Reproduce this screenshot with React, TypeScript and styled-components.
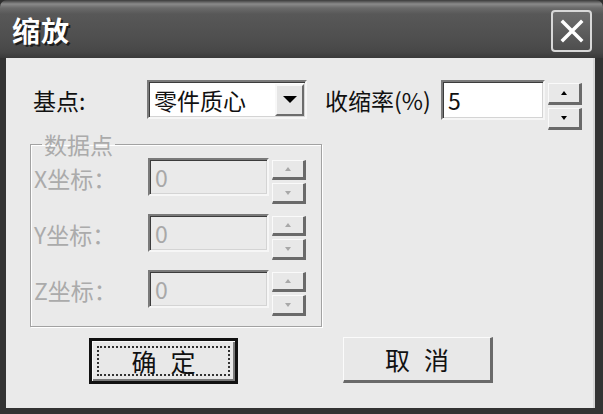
import React from "react";
import styled, { createGlobalStyle } from "styled-components";

const GlobalStyle = createGlobalStyle`
  html, body {
    margin: 0;
    padding: 0;
    background: #2e2e2e;
  }
  body {
    font-family: "Noto Sans CJK SC", "Liberation Sans", sans-serif;
  }
`;

const Window = styled.div`
  width: 603px;
  height: 414px;
  display: flex;
  flex-direction: column;
  background: #333;
  border-radius: 7px 7px 0 0;
  overflow: hidden;
`;

const TitleBar = styled.div`
  height: 58px;
  flex: none;
  display: flex;
  align-items: center;
  justify-content: space-between;
  padding: 0 11px 0 12px;
  box-sizing: border-box;
  background: linear-gradient(
    to bottom,
    #3a3a3a 0px,
    #8a8a8a 4px,
    #6a6a6a 8px,
    #585858 14px,
    #4e4e4e 40px,
    #474747 52px,
    #3a3a3a 58px
  );
`;

const Title = styled.span`
  color: #fff;
  font-size: 28px;
  font-weight: 700;
  letter-spacing: 1px;
  text-shadow: 2px 2px 0 #1e1e1e;
  margin-top: 2px;
`;

const CloseButton = styled.div`
  width: 41px;
  height: 42px;
  box-sizing: border-box;
  border: 2px solid #d8d8d8;
  border-radius: 4px;
  background: linear-gradient(to bottom, #6e6e6e, #4e4e4e);
  display: flex;
  align-items: center;
  justify-content: center;
  margin-top: 4px;
`;

const Body = styled.div`
  flex: 1;
  display: flex;
  padding: 0 8px 6px 6px;
`;

const Client = styled.div`
  flex: 1;
  background: #eaeaea;
  padding: 22px 0 0 24px;
  display: flex;
  flex-direction: column;
  box-shadow: inset -2px 0 0 #d6d6d6;
`;

const Row = styled.div`
  display: flex;
  align-items: flex-start;
`;

const Label = styled.div<{ $width: number; $disabled?: boolean }>`
  width: ${(p) => p.$width}px;
  flex: none;
  height: 40px;
  display: flex;
  align-items: center;
  font-size: 23px;
  color: ${(p) => (p.$disabled ? "#ababab" : "#111")};
  white-space: nowrap;
`;

const Sunken = styled.div<{ $width: number; $height: number; $disabled?: boolean }>`
  width: ${(p) => p.$width}px;
  height: ${(p) => p.$height}px;
  flex: none;
  box-sizing: border-box;
  border: 2px solid;
  border-color: #7a7a7a #f6f6f6 #f6f6f6 #7a7a7a;
  box-shadow: inset 1px 1px 0 #3c3c3c, inset -1px -1px 0 #d4d4d4;
  background: ${(p) => (p.$disabled ? "#eaeaea" : "#fff")};
  display: flex;
  align-items: center;
  padding-left: 5px;
  font-size: 23px;
  color: ${(p) => (p.$disabled ? "#a8a8a8" : "#111")};
  font-family: "Noto Sans CJK SC", "Liberation Sans", sans-serif;
`;

const ComboText = styled.span`
  flex: 1;
`;

const DropButton = styled.div`
  width: 29px;
  height: 32px;
  margin-right: 1px;
  box-sizing: border-box;
  border: 2px solid;
  border-color: #f8f8f8 #6c6c6c #6c6c6c #f8f8f8;
  background: #e6e6e6;
  display: flex;
  align-items: center;
  justify-content: center;
`;

const DownTriangle = styled.span`
  width: 0;
  height: 0;
  border-left: 7px solid transparent;
  border-right: 7px solid transparent;
  border-top: 7px solid #000;
`;

const SpinColumn = styled.div<{ $gap: number; $top: number }>`
  display: flex;
  flex-direction: column;
  gap: ${(p) => p.$gap}px;
  margin-left: 3px;
  margin-top: ${(p) => p.$top}px;
`;

const SpinButton = styled.div<{ $height: number }>`
  width: 34px;
  height: ${(p) => p.$height}px;
  box-sizing: border-box;
  border-style: solid;
  border-width: 1px 3px 3px 1px;
  border-color: #fafafa #6a6a6a #6a6a6a #fafafa;
  background: #e8e8e8;
  display: flex;
  align-items: center;
  justify-content: center;
`;

const Arrow = styled.span<{ $up?: boolean; $disabled?: boolean }>`
  width: 0;
  height: 0;
  border-left: 3px solid transparent;
  border-right: 3px solid transparent;
  ${(p) =>
    p.$up
      ? `border-bottom: 4px solid ${p.$disabled ? "#a8a8a8" : "#000"};`
      : `border-top: 4px solid ${p.$disabled ? "#a8a8a8" : "#000"};`}
`;

const Group = styled.fieldset`
  margin: 0;
  width: 292px;
  box-sizing: border-box;
  padding: 0 0 18px 3px;
  border: 1px solid #a2a2a2;
  box-shadow: inset 1px 1px 0 #fff, 1px 1px 0 #fff;
  display: flex;
  flex-direction: column;
  gap: 18px;
`;

const Legend = styled.legend`
  margin-left: 8px;
  padding: 0 2px;
  font-size: 23px;
  line-height: 28px;
  color: #ababab;
`;

const GroupRow = styled.div`
  display: flex;
  align-items: flex-start;
  height: 38px;
`;

const ButtonRow = styled.div`
  display: flex;
  align-items: flex-start;
  margin-top: 10px;
  padding-left: 59px;
  gap: 105px;
`;

const PushButton = styled.div<{ $default?: boolean }>`
  width: ${(p) => (p.$default ? 149 : 150)}px;
  height: 46px;
  box-sizing: border-box;
  border-style: solid;
  border-width: ${(p) => (p.$default ? "3px" : "1px 3px 3px 1px")};
  border-color: ${(p) =>
    p.$default ? "#111" : "#fbfbfb #6a6a6a #6a6a6a #fbfbfb"};
  background: #e8e8e8;
  box-shadow: ${(p) =>
    p.$default ? "inset 1px 1px 0 #fafafa, inset -2px -2px 0 #7a7a7a" : "none"};
  display: flex;
  align-items: center;
  justify-content: center;
  padding: 5px;
  margin-top: ${(p) => (p.$default ? 1 : 0)}px;
`;

const FocusRing = styled.div<{ $show?: boolean }>`
  width: 100%;
  height: 100%;
  box-sizing: border-box;
  border: 2px dotted ${(p) => (p.$show ? "#333" : "transparent")};
  display: flex;
  align-items: center;
  justify-content: center;
  font-size: 25px;
  letter-spacing: 14px;
  padding-left: 14px;
  color: #111;
`;

function Spinner({ disabled, tall }: { disabled?: boolean; tall?: boolean }) {
  return (
    <SpinColumn $gap={3} $top={tall ? 3 : 2}>
      <SpinButton $height={tall ? 22 : 20}>
        <Arrow $up $disabled={disabled} />
      </SpinButton>
      <SpinButton $height={tall ? 22 : 21}>
        <Arrow $disabled={disabled} />
      </SpinButton>
    </SpinColumn>
  );
}

const coords = ["X坐标：", "Y坐标：", "Z坐标："];

export default function App() {
  return (
    <>
      <GlobalStyle />
      <Window>
        <TitleBar>
          <Title>缩放</Title>
          <CloseButton>
            <svg width="26" height="26" viewBox="0 0 26 26">
              <path
                d="M4 4 L22 22 M22 4 L4 22"
                stroke="#fff"
                strokeWidth="3.5"
                strokeLinecap="square"
              />
            </svg>
          </CloseButton>
        </TitleBar>
        <Body>
          <Client>
            <Row>
              <Label $width={117} style={{ paddingLeft: 3, boxSizing: "border-box" }}>
                基点:
              </Label>
              <Sunken $width={160} $height={39}>
                <ComboText>零件质心</ComboText>
                <DropButton>
                  <DownTriangle />
                </DropButton>
              </Sunken>
              <Label $width={116} style={{ marginLeft: 18 }}>
                收缩率(%)
              </Label>
              <Sunken $width={104} $height={40}>
                5
              </Sunken>
              <Spinner tall />
            </Row>
            <Group>
              <Legend>数据点</Legend>
              {coords.map((c) => (
                <GroupRow key={c}>
                  <Label $width={114} $disabled>
                    {c}
                  </Label>
                  <Sunken $width={121} $height={38} $disabled>
                    0
                  </Sunken>
                  <Spinner disabled />
                </GroupRow>
              ))}
            </Group>
            <ButtonRow>
              <PushButton $default>
                <FocusRing $show>确定</FocusRing>
              </PushButton>
              <PushButton>
                <FocusRing>取消</FocusRing>
              </PushButton>
            </ButtonRow>
          </Client>
        </Body>
      </Window>
    </>
  );
}
